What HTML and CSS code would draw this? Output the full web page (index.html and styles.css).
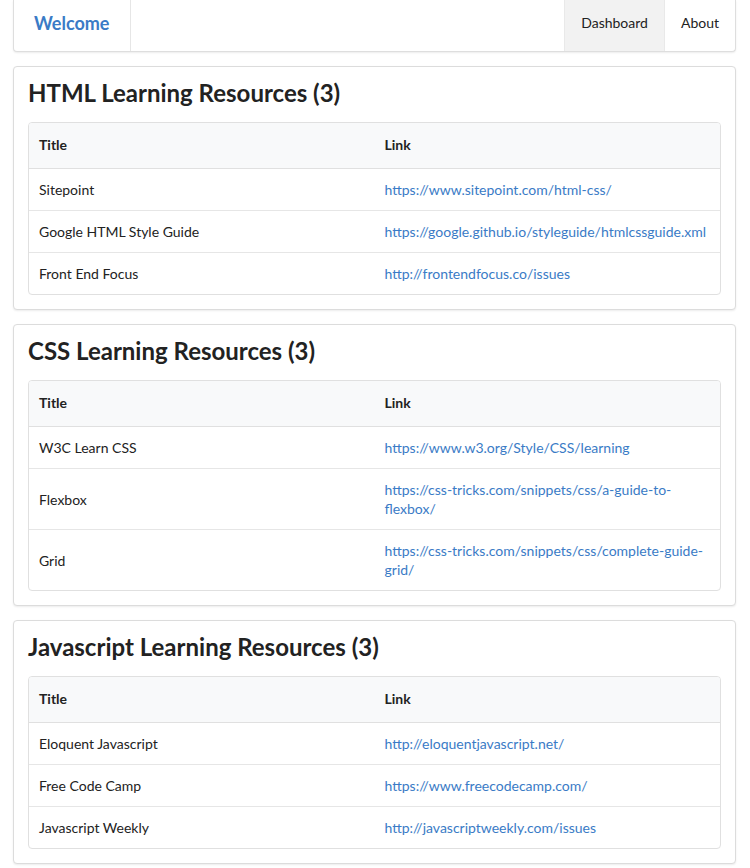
FILE: index.html
```html
<!DOCTYPE html>
<html>
<head>
<meta charset="utf-8">
<link rel="stylesheet" href="styles.css">
</head>
<body>
<nav class="navbar">
  <a class="brand" href="#">Welcome</a>
  <div class="nav-links">
    <a class="nav-item active" href="#">Dashboard</a>
    <a class="nav-item" href="#">About</a>
  </div>
</nav>

<section class="card">
  <h2 class="card-title">HTML Learning Resources (3)</h2>
  <div class="table-wrap">
    <table class="res-table">
      <thead><tr><th>Title</th><th>Link</th></tr></thead>
      <tbody>
        <tr><td>Sitepoint</td><td><a href="#">https://www.sitepoint.com/html-css/</a></td></tr>
        <tr><td>Google HTML Style Guide</td><td><a href="#">https://google.github.io/styleguide/htmlcssguide.xml</a></td></tr>
        <tr><td>Front End Focus</td><td><a href="#">http://frontendfocus.co/issues</a></td></tr>
      </tbody>
    </table>
  </div>
</section>

<section class="card">
  <h2 class="card-title">CSS Learning Resources (3)</h2>
  <div class="table-wrap">
    <table class="res-table">
      <thead><tr><th>Title</th><th>Link</th></tr></thead>
      <tbody>
        <tr><td>W3C Learn CSS</td><td><a href="#">https://www.w3.org/Style/CSS/learning</a></td></tr>
        <tr><td>Flexbox</td><td><a href="#">https://css-tricks.com/snippets/css/a-guide-to-flexbox/</a></td></tr>
        <tr><td>Grid</td><td><a href="#">https://css-tricks.com/snippets/css/complete-guide-grid/</a></td></tr>
      </tbody>
    </table>
  </div>
</section>

<section class="card">
  <h2 class="card-title">Javascript Learning Resources (3)</h2>
  <div class="table-wrap">
    <table class="res-table">
      <thead><tr><th>Title</th><th>Link</th></tr></thead>
      <tbody>
        <tr><td>Eloquent Javascript</td><td><a href="#">http://eloquentjavascript.net/</a></td></tr>
        <tr><td>Free Code Camp</td><td><a href="#">https://www.freecodecamp.com/</a></td></tr>
        <tr><td>Javascript Weekly</td><td><a href="#">http://javascriptweekly.com/issues</a></td></tr>
      </tbody>
    </table>
  </div>
</section>
</body>
</html>
```

FILE: styles.css
```css
* { box-sizing: border-box; }

body {
  margin: 0;
  padding: 0 14px 0 13px;
  font-family: Lato, "Open Sans", sans-serif;
  font-size: 14px;
  line-height: 20px;
  color: #222;
  background: #fff;
}

a { color: #3a7bc6; text-decoration: none; }

.navbar {
  display: flex;
  justify-content: space-between;
  height: 52px;
  border: 1px solid #dedede;
  border-top: none;
  border-radius: 0 0 4px 4px;
  box-shadow: 0 1px 2px rgba(0,0,0,0.08);
  margin-bottom: 14px;
  background: #fff;
}

.brand {
  display: flex;
  align-items: center;
  padding: 0 20px 6px 20px;
  width: 117px;
  border-right: 1px solid #e6e6e6;
  font-size: 18px;
  font-weight: 700;
  color: #3a7bc6;
}

.nav-links { display: flex; }

.nav-item {
  display: flex;
  align-items: center;
  padding: 0 16px 6px;
  color: #222;
  font-size: 14px;
  height: 51px;
  border-left: 1px solid #e9e9e9;
}

.nav-item.active { background: #f2f2f2; }

.card {
  border: 1px solid #dcdcdc;
  border-radius: 4px;
  box-shadow: 0 1px 2px rgba(0,0,0,0.08);
  padding: 14px;
  margin-bottom: 14px;
  background: #fff;
}

.card-title {
  margin: 0 0 17px;
  font-size: 24px;
  line-height: 24px;
  font-weight: 700;
  color: #222;
}

.table-wrap {
  border: 1px solid #e0e0e0;
  border-radius: 4px;
  overflow: hidden;
}

.res-table {
  width: 100%;
  border-collapse: collapse;
  table-layout: fixed;
}

.res-table th {
  text-align: left;
  font-weight: 700;
  background: #f8f9fa;
  padding: 12px 10px 13px;
  border-bottom: 1px solid #e0e0e0;
}

.res-table td {
  padding: 11px 10px 11px;
  line-height: 19px;
  border-top: 1px solid #e6e6e6;
  vertical-align: middle;
}

.res-table tbody tr:first-child td { border-top: none; }
```
